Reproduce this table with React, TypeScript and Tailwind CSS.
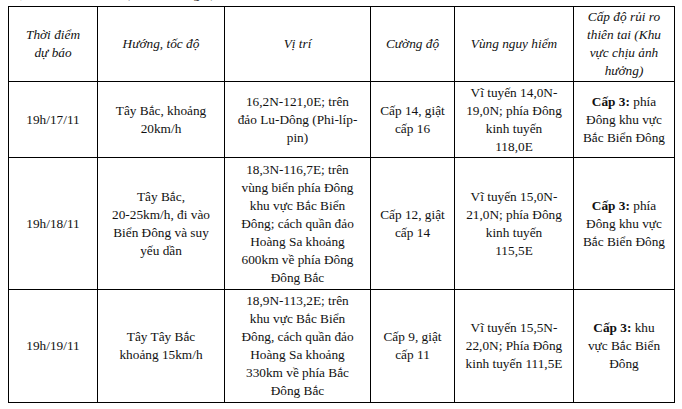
import React from 'react';

type Row = {
  time: string;
  dir: string[];
  pos: string[];
  power: string[];
  zone: string[];
  risk: string[];
  height: string;
};

const rows: Row[] = [
  {
    time: '19h/17/11',
    dir: ['Tây Bắc, khoảng', '20km/h'],
    pos: ['16,2N-121,0E; trên', 'đảo Lu-Dông (Phi-líp-', 'pin)'],
    power: ['Cấp 14, giật', 'cấp 16'],
    zone: ['Vĩ tuyến 14,0N-', '19,0N; phía Đông', 'kinh tuyến', '118,0E'],
    risk: ['phía', 'Đông khu vực', 'Bắc Biển Đông'],
    height: 'h-[75px]',
  },
  {
    time: '19h/18/11',
    dir: ['Tây Bắc,', '20-25km/h, đi vào', 'Biển Đông và suy', 'yếu dần'],
    pos: [
      '18,3N-116,7E; trên',
      'vùng biển phía Đông',
      'khu vực Bắc Biển',
      'Đông; cách quần đảo',
      'Hoàng Sa khoảng',
      '600km về phía Đông',
      'Đông Bắc',
    ],
    power: ['Cấp 12, giật', 'cấp 14'],
    zone: ['Vĩ tuyến 15,0N-', '21,0N; phía Đông', 'kinh tuyến', '115,5E'],
    risk: ['phía', 'Đông khu vực', 'Bắc Biển Đông'],
    height: 'h-[131px]',
  },
  {
    time: '19h/19/11',
    dir: ['Tây Tây Bắc', 'khoảng 15km/h'],
    pos: [
      '18,9N-113,2E; trên',
      'khu vực Bắc Biển',
      'Đông, cách quần đảo',
      'Hoàng Sa khoảng',
      '330km về phía Bắc',
      'Đông Bắc',
    ],
    power: ['Cấp 9, giật', 'cấp 11'],
    zone: ['Vĩ tuyến 15,5N-', '22,0N; Phía Đông', 'kinh tuyến 111,5E'],
    risk: ['khu', 'vực Bắc Biển', 'Đông'],
    height: 'h-[112px]',
  },
];

const Cell = ({ h, children }: { h: string; children: React.ReactNode }) => (
  <div className={`${h} flex flex-col items-center justify-center overflow-hidden`}>{children}</div>
);

const Lines = ({ lines }: { lines: string[] }) => (
  <>
    {lines.map((l, i) => (
      <div key={i} className="whitespace-nowrap">
        {l}
      </div>
    ))}
  </>
);

const serif = "font-['Liberation_Serif','Times_New_Roman',serif]";
const cell = 'border border-black p-0 text-center align-middle';

export default function App() {
  return (
    <div className={`${serif} w-[682px] h-[409px] bg-white text-[#111] overflow-hidden`}>
      <div className="h-[6px] overflow-hidden">
        <div className="-mt-[15px] ml-2 text-[13.3px] leading-[18px] whitespace-nowrap">
          Dự báo diễn biến bão (tính đến 16 giờ)
        </div>
      </div>
      <table className="ml-2 w-[667px] table-fixed border-collapse text-[13.3px] leading-[18px]">
        <colgroup>
          <col className="w-[89px]" />
          <col className="w-[127px]" />
          <col className="w-[146px]" />
          <col className="w-[84px]" />
          <col className="w-[119px]" />
          <col className="w-[101px]" />
        </colgroup>
        <thead>
          <tr className="italic">
            <th className={`${cell} font-normal`}>
              <Cell h="h-[74px]">
                <Lines lines={['Thời điểm', 'dự báo']} />
              </Cell>
            </th>
            <th className={`${cell} font-normal`}>
              <Cell h="h-[74px]">Hướng, tốc độ</Cell>
            </th>
            <th className={`${cell} font-normal`}>
              <Cell h="h-[74px]">Vị trí</Cell>
            </th>
            <th className={`${cell} font-normal`}>
              <Cell h="h-[74px]">Cường độ</Cell>
            </th>
            <th className={`${cell} font-normal`}>
              <Cell h="h-[74px]">Vùng nguy hiểm</Cell>
            </th>
            <th className={`${cell} font-normal`}>
              <Cell h="h-[74px]">
                <Lines lines={['Cấp độ rủi ro', 'thiên tai (Khu', 'vực chịu ảnh', 'hưởng)']} />
              </Cell>
            </th>
          </tr>
        </thead>
        <tbody>
          {rows.map((r) => (
            <tr key={r.time}>
              <td className={cell}>
                <Cell h={r.height}>{r.time}</Cell>
              </td>
              <td className={cell}>
                <Cell h={r.height}>
                  <Lines lines={r.dir} />
                </Cell>
              </td>
              <td className={cell}>
                <Cell h={r.height}>
                  <Lines lines={r.pos} />
                </Cell>
              </td>
              <td className={cell}>
                <Cell h={r.height}>
                  <Lines lines={r.power} />
                </Cell>
              </td>
              <td className={cell}>
                <Cell h={r.height}>
                  <Lines lines={r.zone} />
                </Cell>
              </td>
              <td className={cell}>
                <Cell h={r.height}>
                  <div className="whitespace-nowrap">
                    <span className="font-bold">Cấp 3:</span> {r.risk[0]}
                  </div>
                  <Lines lines={r.risk.slice(1)} />
                </Cell>
              </td>
            </tr>
          ))}
        </tbody>
      </table>
    </div>
  );
}
